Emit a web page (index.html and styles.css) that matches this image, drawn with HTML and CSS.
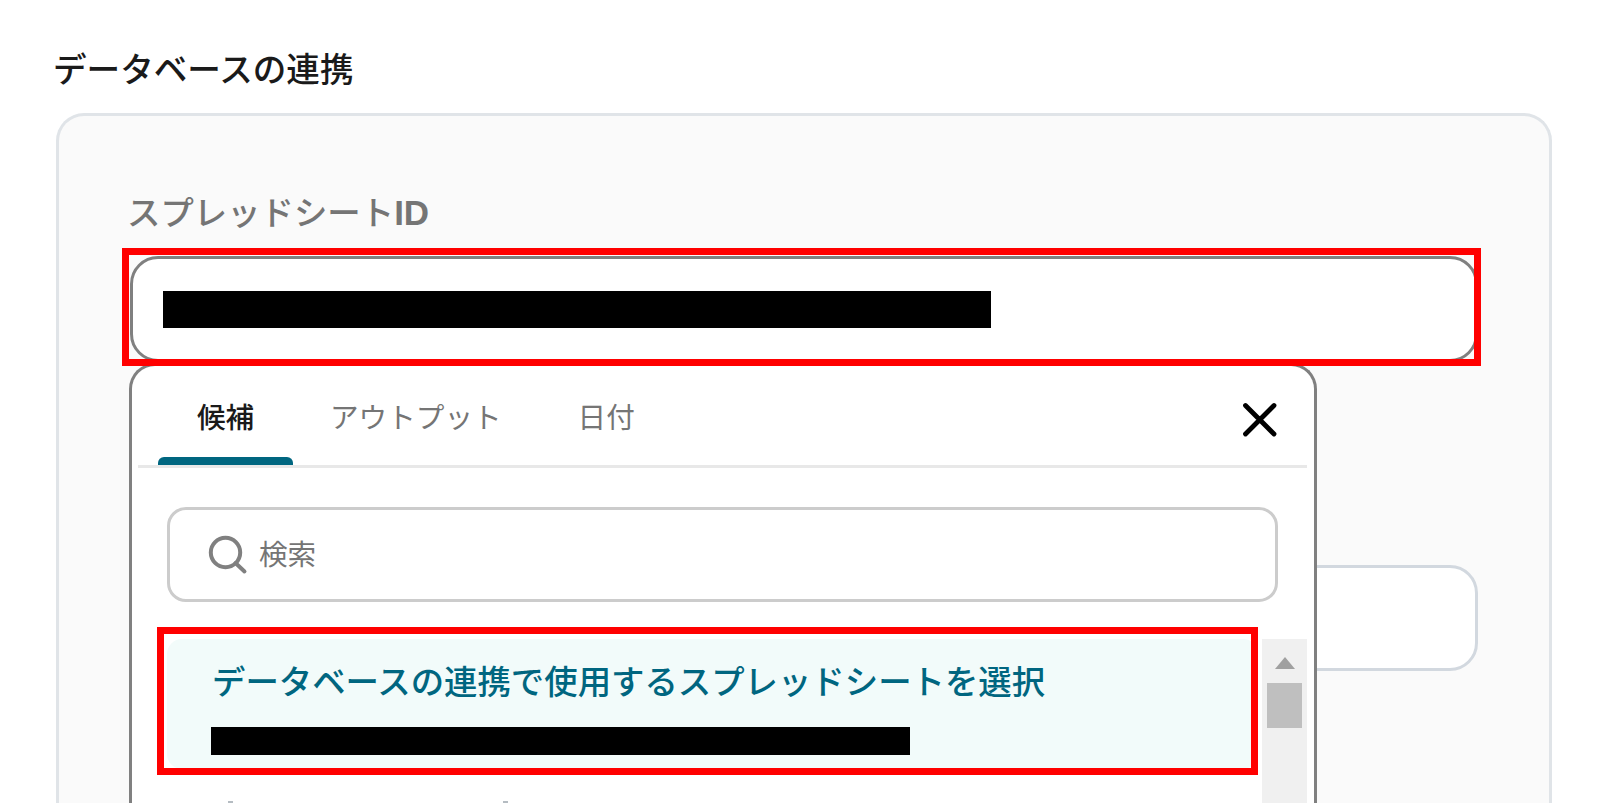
FILE: index.html
```html
<!DOCTYPE html>
<html lang="ja">
<head>
    <meta charset="UTF-8">
    <meta name="viewport" content="width=device-width, initial-scale=1.0">
    <title>データベースの連携</title>
    <link rel="stylesheet" href="styles.css">
</head>
<body>
    <h1 class="title">データベースの連携</h1>

    <div class="card">
        <div class="label">スプレッドシート<span class="latin">ID</span></div>
        <div class="field">
            <div class="input active"><span class="mask"></span></div>

            <div class="popup">
                <div class="tabs">
                    <div class="tab selected">候補</div>
                    <div class="tab output">アウトプット</div>
                    <div class="tab">日付</div>
                    <svg class="close" viewBox="0 0 36 36">
                        <path d="M3.5 3.5L32 32M32 3.5L3.5 32"/>
                    </svg>
                </div>

                <div class="search">
                    <svg class="search-icon" viewBox="0 0 40 40">
                        <circle cx="17.5" cy="17.5" r="14.7"/>
                        <path d="M27.5 28L36.5 36.5"/>
                    </svg>
                    <span class="placeholder">検索</span>
                </div>

                <div class="list">
                    <div class="items">
                        <div class="item">
                            <div class="item-name">データベースの連携で使用するスプレッドシートを選択</div>
                            <div class="item-mask"></div>
                        </div>
                        <div class="next-item"><i></i><i></i></div>
                    </div>
                    <div class="scrollbar">
                        <svg class="arrow" viewBox="0 0 20 12"><path d="M10 0L20 12H0Z"/></svg>
                        <div class="thumb"></div>
                    </div>
                    <div class="frame frame-item"></div>
                </div>
            </div>

            <div class="frame frame-input"></div>
        </div>
        <div class="input second"></div>
    </div>
</body>
</html>
```
FILE: styles.css
```css
* {
    box-sizing: border-box;
}
body {
    margin: 0;
    height: 803px;
    overflow: hidden;
    background: #fff;
    color: #1a1a1a;
    font-family: "Noto Sans CJK JP", sans-serif;
    font-size: 28.6px;
}
.title {
    margin: 0;
    padding: 43px 0 0 53px;
    height: 113px;
    font-size: 33.6px;
    line-height: 50px;
    font-weight: 500;
}
.card {
    width: 1496px;
    height: 690px;
    margin-left: 56px;
    padding: 70px 71px 0;
    border: 3px solid #e0e4e8;
    border-bottom: none;
    border-radius: 28px 28px 0 0;
    background: #fafafa;
}
.label {
    height: 70px;
    margin-left: -3px;
    color: #757575;
    font-size: 33.4px;
    line-height: 49px;
    font-weight: 500;
}
.latin {
    font-family: "Liberation Sans", sans-serif;
    font-size: 35px;
    font-weight: 700;
}
.field {
    position: relative;
}
.input {
    width: 1348px;
    height: 106px;
    border: 3px solid #d2d8df;
    border-radius: 28px;
    background: #fff;
}
.active {
    padding: 32px 30px;
    border-color: #808080;
}
.mask {
    display: block;
    width: 828px;
    height: 37px;
    background: #000;
}
.second {
    margin-top: 203px;
}

/* suggestion popup */
.popup {
    position: absolute;
    left: -1px;
    top: 107px;
    width: 1188px;
    height: 440px;
    padding: 0 7px 0 6px;
    border: 3px solid #808080;
    border-bottom: none;
    border-radius: 26px 26px 0 0;
    background: #fff;
}
.tabs {
    display: flex;
    height: 102px;
    padding-left: 20px;
    border-bottom: 3px solid #e8e8e8;
    color: #757575;
}
.tab {
    height: 99px;
    padding: 28px 39px 0;
    line-height: 44px;
    white-space: nowrap;
}
.output {
    padding: 28px 37px;
}
.selected {
    position: relative;
    width: 135px;
    color: #1a1a1a;
    font-weight: 500;
}
.selected::after {
    content: "";
    position: absolute;
    left: 0;
    right: 0;
    bottom: 0;
    height: 8px;
    border-radius: 6px 6px 0 0;
    background: #006680;
}
.close {
    width: 36px;
    height: 36px;
    margin: 36px 29px 0 auto;
    fill: none;
    stroke: #000;
    stroke-width: 4.8;
    stroke-linecap: round;
}
.search {
    display: flex;
    align-items: center;
    gap: 11px;
    width: 1111px;
    height: 95px;
    margin: 39px 0 0 29px;
    padding-left: 38px;
    border: 3px solid #ccc;
    border-radius: 19px;
    color: #757575;
    line-height: 44px;
}
.search-icon {
    width: 40px;
    height: 40px;
    fill: none;
    stroke: #808080;
    stroke-width: 4;
    stroke-linecap: round;
}
.placeholder {
    padding-bottom: 4px;
}
.list {
    position: relative;
    display: flex;
    justify-content: space-between;
    height: 164px;
    margin: 37px 0 0 29px;
}
.items {
    width: 1091px;
}
.item {
    height: 130px;
    padding: 16px 0 0 44px;
    border-radius: 15px;
    background: #f2fbfa;
}
.item-name {
    margin-left: 1px;
    color: #006680;
    font-size: 33.4px;
    line-height: 50px;
    font-weight: 500;
    white-space: nowrap;
}
.item-mask {
    width: 699px;
    height: 28px;
    margin-top: 22px;
    background: #000;
}
.next-item {
    display: flex;
    gap: 270px;
    padding: 32px 0 0 61px;
}
.next-item i {
    width: 5px;
    height: 2px;
    background: #b5bcc2;
}
.scrollbar {
    display: flex;
    flex-direction: column;
    align-items: center;
    width: 45px;
    padding-top: 18px;
    background: #f0f0f0;
}
.arrow {
    width: 20px;
    height: 12px;
    fill: #a0a0a0;
}
.thumb {
    width: 35px;
    height: 45px;
    margin-top: 14px;
    background: #bfbfbf;
}

/* red highlight frames */
.frame {
    position: absolute;
    border: 7px solid #f00;
}
.frame-input {
    left: -8px;
    top: -8px;
    width: 1359px;
    height: 118px;
}
.frame-item {
    left: -10px;
    top: -12px;
    width: 1101px;
    height: 148px;
}
```
